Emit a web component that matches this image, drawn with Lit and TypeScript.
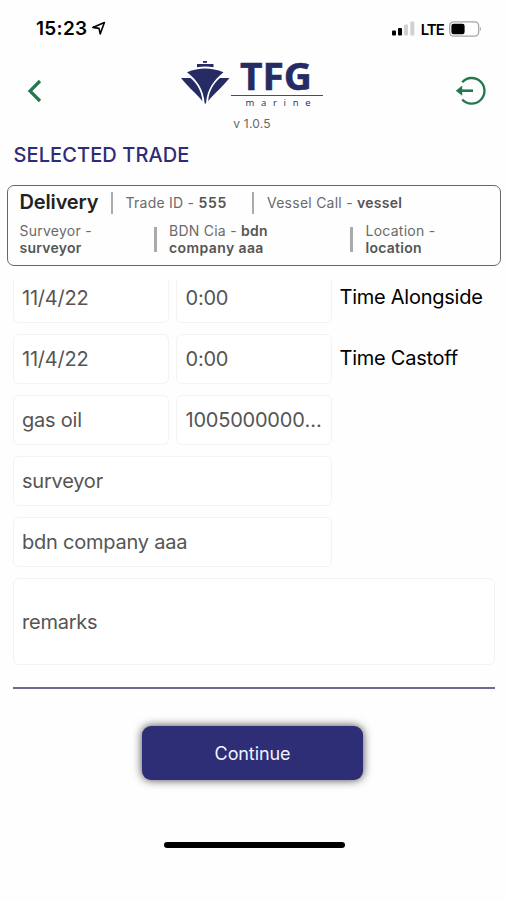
import { LitElement, html, css } from "lit";
import { customElement, property } from "lit/decorators.js";

@customElement("status-bar")
export class StatusBar extends LitElement {
  static styles = css`
    :host { display: flex; justify-content: space-between; height: 56px; padding: 0 25px 0 36px; box-sizing: border-box; }
    .side { display: flex; align-items: center; height: 57px; }
    .time { font-size: 19px; font-weight: 600; letter-spacing: 0.3px; }
    .arrow { margin-left: 4px; }
    .net { font-size: 15px; font-weight: 600; margin: 1px 5px 0 6px; letter-spacing: -0.9px; }
    svg { display: block; }
  `;
  render() {
    return html`
      <div class="side">
        <span class="time">15:23</span>
        <svg class="arrow" width="15" height="15" viewBox="0 0 15 15">
          <path d="M1.8 6.4 L13.4 1.5 L9.2 12.9 L8 7.4 Z" fill="none" stroke="#000" stroke-width="1.6" stroke-linejoin="round" />
        </svg>
      </div>
      <div class="side">
        <svg width="23" height="15" viewBox="0 0 23 15">
          <rect x="0" y="9.5" width="4" height="5" rx="1" />
          <rect x="6" y="7" width="4" height="7.5" rx="1" />
          <rect x="12" y="3.5" width="4" height="11" rx="1" fill="#d0d0d0" />
          <rect x="18.3" y="0.5" width="4" height="14" rx="1" fill="#d0d0d0" />
        </svg>
        <span class="net">LTE</span>
        <svg width="33" height="16" viewBox="0 0 33 16">
          <rect x="0.7" y="0.9" width="29" height="14.2" rx="4" fill="none" stroke="#a5a5a5" stroke-width="1.3" />
          <rect x="2.4" y="2.7" width="13.2" height="10.6" rx="2.2" />
          <path d="M31 5.8 Q33 8 31 10.2 Z" fill="#a5a5a5" />
        </svg>
      </div>
    `;
  }
}

@customElement("app-header")
export class AppHeader extends LitElement {
  static styles = css`
    :host { display: flex; justify-content: space-between; height: 86px; padding: 0 21px 0 27px; box-sizing: border-box; }
    svg { display: block; }
    .back { margin-top: 23px; }
    .exit { margin-top: 20px; }
    .brand { display: flex; flex-direction: column; align-items: center; margin-left: 6px; }
    .logo { margin-top: 4px; }
    .version { font-size: 12px; line-height: 16px; color: #666; margin: 4px 0 0 1px; letter-spacing: 0.2px; }
    .name { font: 700 37.5px "Open Sans", sans-serif; }
    .sub { font: 500 9.5px "Open Sans", sans-serif; }
  `;
  render() {
    return html`
      <svg class="back" width="15" height="24" viewBox="0 0 15 24">
        <path d="M13 2 L3 12 L13 22" fill="none" stroke="#25784c" stroke-width="3.2" />
      </svg>
      <div class="brand">
        <svg class="logo" width="144" height="52" viewBox="180 60 144 52" overflow="visible">
          <g fill="#262b63">
            <rect x="203" y="61" width="4" height="1.8" />
            <path d="M197 64 H213.5 V67.2 Q205.3 66 197 67.2 Z" />
            <path d="M187 72.3 Q205 64.8 223.5 72.3 C214 80 207 89 206 103.5 H204.7 C203.5 89 197 80 187 72.3 Z" />
            <path d="M181 78 H190.5 C196.5 83.5 201.5 90 202.4 101.2 C198 95 188 87 181 78 Z" />
            <path d="M229.5 78 H220 C214 83.5 209 90 208.2 101.2 C212.5 95 222.5 87 229.5 78 Z" />
            <rect x="231" y="95" width="92" height="1" opacity="0.85" />
            <text class="name" x="240" y="90" textLength="72" lengthAdjust="spacingAndGlyphs" stroke="#262b63" stroke-width="0.5">TFG</text>
            <text class="sub" x="245.5" y="106" textLength="65">marine</text>
          </g>
        </svg>
        <span class="version">v 1.0.5</span>
      </div>
      <svg class="exit" width="31" height="30" viewBox="0 0 31 30">
        <path d="M7.2 6.2 A12.8 12.8 0 1 1 7.2 23.4" fill="none" stroke="#25784c" stroke-width="2.3" />
        <path d="M5.5 14.7 H18" stroke="#25784c" stroke-width="2.6" />
        <path d="M0.8 14.7 L7.2 9.6 V19.8 Z" fill="#25784c" />
      </svg>
    `;
  }
}

@customElement("trade-summary")
export class TradeSummary extends LitElement {
  static styles = css`
    :host { display: flex; flex-direction: column; height: 81px; margin: 0 6px 0 7px; padding: 4px 11px 0 11.5px; box-sizing: border-box; border: 1.5px solid #666; border-radius: 7px; color: #6a6a6a; font-size: 14px; line-height: 17px; letter-spacing: 0.25px; }
    .row { display: flex; align-items: center; }
    .top { height: 25px; }
    .bottom { height: 34px; margin-top: 7px; }
    .kind { font-size: 20px; font-weight: 600; color: #222; letter-spacing: -0.15px; width: 91px; line-height: 25px; }
    .bar { width: 2.5px; height: 22px; background: #aaa; flex: none; }
    .bottom .bar { height: 25px; }
    .id { width: 126px; padding-left: 12.5px; }
    .call { padding-left: 13px; }
    .col1 { width: 134.5px; }
    .col2 { width: 181px; padding-left: 12.5px; }
    .col3 { padding-left: 13px; }
    .b { display: block; }
    b { font-weight: 600; color: #555; }
    .id b { letter-spacing: 0.7px; }
    .col2 .b { letter-spacing: 0.4px; }
  `;
  render() {
    return html`
      <div class="row top">
        <div class="kind">Delivery</div><div class="bar"></div>
        <div class="id">Trade ID - <b>555</b></div><div class="bar"></div>
        <div class="call">Vessel Call - <b>vessel</b></div>
      </div>
      <div class="row bottom">
        <div class="col1">Surveyor -<b class="b">surveyor</b></div><div class="bar"></div>
        <div class="col2">BDN Cia - <b>bdn</b><b class="b">company aaa</b></div><div class="bar"></div>
        <div class="col3">Location -<b class="b">location</b></div>
      </div>
    `;
  }
}

@customElement("form-field")
export class FormField extends LitElement {
  @property() value = "";
  static styles = css`
    :host { display: flex; align-items: center; min-width: 0; box-sizing: border-box; padding: 0 5px 0 8.5px; border: 1.5px solid #f3f3f3; border-radius: 6px; color: #555; font-size: 20px; letter-spacing: -0.22px; background: #fff; }
    .value { overflow: hidden; text-overflow: ellipsis; white-space: nowrap; }
  `;
  render() {
    return html`<span class="value">${this.value}</span>`;
  }
}

@customElement("app-root")
export class AppRoot extends LitElement {
  static styles = css`
    :host { display: flex; flex-direction: column; height: 900px; background: #fefefe; color: #000; font-family: Inter, "Liberation Sans", sans-serif; overflow: hidden; }
    .title { height: 42px; padding: 1px 0 0 13.5px; font-size: 20px; line-height: 25px; font-weight: 500; letter-spacing: 0.1px; color: #2d2c76; }
    .scroll { height: 410px; margin-top: 14px; padding: 0 12px 0 12.5px; overflow: hidden; }
    .grid { display: grid; grid-template-columns: 156.5px 156px 1fr; column-gap: 7px; row-gap: 11px; grid-auto-rows: 50px; margin-top: -7px; }
    .wide { grid-column: span 2; }
    .remarks { grid-column: 1 / -1; height: 87px; }
    .label { padding-left: 0.5px; font-size: 20px; line-height: 48px; letter-spacing: -0.25px; white-space: nowrap; }
    .rule { height: 1.5px; margin-top: 59px; background: #6d6a9b; }
    .continue { align-self: center; width: 221px; height: 54px; margin: 36px 2px 0 0; padding: 0; border: 0; border-radius: 9px; background: #2d2e75; color: #f2f2ff; font: 400 18px Inter, sans-serif; letter-spacing: -0.1px; box-shadow: 0 0 10px rgba(0, 0, 0, 0.75); }
    .home { align-self: center; width: 181px; height: 6px; margin: 62px 0 0 1px; border-radius: 3px; background: #000; }
  `;
  render() {
    return html`
      <status-bar></status-bar>
      <app-header></app-header>
      <div class="title">SELECTED TRADE</div>
      <trade-summary></trade-summary>
      <div class="scroll">
        <div class="grid">
          <form-field value="11/4/22"></form-field>
          <form-field value="0:00"></form-field>
          <div class="label">Time Alongside</div>
          <form-field value="11/4/22"></form-field>
          <form-field value="0:00"></form-field>
          <div class="label">Time Castoff</div>
          <form-field value="gas oil"></form-field>
          <form-field value="100500000000000"></form-field>
          <span></span>
          <form-field class="wide" value="surveyor"></form-field>
          <span></span>
          <form-field class="wide" value="bdn company aaa"></form-field>
          <span></span>
          <form-field class="remarks" value="remarks"></form-field>
        </div>
        <div class="rule"></div>
      </div>
      <button class="continue">Continue</button>
      <div class="home"></div>
    `;
  }
}
